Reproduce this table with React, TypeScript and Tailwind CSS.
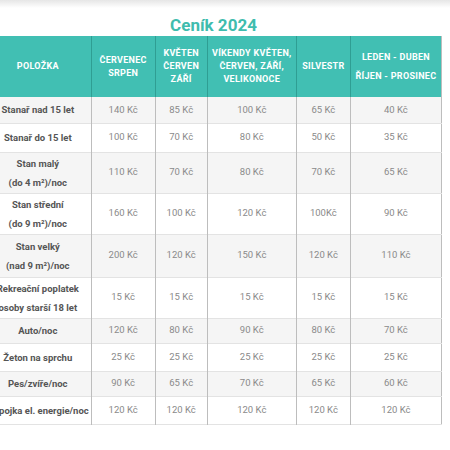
type Row = { label: string[]; values: string[]; h: number };

const rows: Row[] = [
  { label: ['Stanař nad 15 let'], values: ['140 Kč', '85 Kč', '100 Kč', '65 Kč', '40 Kč'], h: 26 },
  { label: ['Stanař do 15 let'], values: ['100 Kč', '70 Kč', '80 Kč', '50 Kč', '35 Kč'], h: 29 },
  { label: ['Stan malý', '(do 4 m²)/noc'], values: ['110 Kč', '70 Kč', '80 Kč', '70 Kč', '65 Kč'], h: 41 },
  { label: ['Stan střední', '(do 9 m²)/noc'], values: ['160 Kč', '100 Kč', '120 Kč', '100Kč', '90 Kč'], h: 41 },
  { label: ['Stan velký', '(nad 9 m²)/noc'], values: ['200 Kč', '120 Kč', '150 Kč', '120 Kč', '110 Kč'], h: 43 },
  { label: ['Rekreační poplatek', 'osoby starší 18 let'], values: ['15 Kč', '15 Kč', '15 Kč', '15 Kč', '15 Kč'], h: 41 },
  { label: ['Auto/noc'], values: ['120 Kč', '80 Kč', '90 Kč', '80 Kč', '70 Kč'], h: 25 },
  { label: ['Žeton na sprchu'], values: ['25 Kč', '25 Kč', '25 Kč', '25 Kč', '25 Kč'], h: 28 },
  { label: ['Pes/zvíře/noc'], values: ['90 Kč', '65 Kč', '70 Kč', '65 Kč', '60 Kč'], h: 25 },
  { label: ['Přípojka el. energie/noc'], values: ['120 Kč', '120 Kč', '120 Kč', '120 Kč', '120 Kč'], h: 28 },
];

const widths = ['w-[106px]', 'w-[64px]', 'w-[52px]', 'w-[89px]', 'w-[54px]', 'w-[91px]'];

function HeadCell({ lines, idx, wide }: { lines: string[]; idx: number; wide?: boolean }) {
  return (
    <th
      className={`${widths[idx]} border-r border-[#2f9e93] last:border-r-0 p-0 align-middle text-center font-bold text-[9px] tracking-[0.3px] text-white ${
        wide ? 'leading-[19px]' : 'leading-[13px]'
      }`}
    >
      {lines.map((l) => (
        <div key={l} className="whitespace-nowrap">
          {l}
        </div>
      ))}
    </th>
  );
}

export default function App() {
  return (
    <div className="w-[450px] h-[450px] overflow-hidden bg-white font-['Roboto','Liberation_Sans',sans-serif]">
      <div className="h-[8px] bg-gradient-to-b from-[#e6e6e6] to-white" />
      <div className="-ml-[15px] w-[457px] pt-[7px]">
        <h1 className="h-[20px] mb-[1px] text-center text-[17px] leading-[20px] font-bold text-[#3fbcae]">
          Ceník 2024
        </h1>
        <table className="table-fixed border-collapse w-[457px] border-r border-[#bdbdbd]">
          <thead>
            <tr className="h-[61px] bg-[#41bfb3]">
              <HeadCell idx={0} lines={['POLOŽKA']} />
              <HeadCell idx={1} lines={['ČERVENEC', 'SRPEN']} />
              <HeadCell idx={2} lines={['KVĚTEN', 'ČERVEN', 'ZÁŘÍ']} />
              <HeadCell idx={3} lines={['VÍKENDY KVĚTEN,', 'ČERVEN, ZÁŘÍ,', 'VELIKONOCE']} />
              <HeadCell idx={4} lines={['SILVESTR']} />
              <HeadCell idx={5} lines={['LEDEN - DUBEN', 'ŘÍJEN - PROSINEC']} wide />
            </tr>
          </thead>
          <tbody>
            {rows.map((r, i) => (
              <tr
                key={i}
                style={{ height: r.h }}
                className={`${i % 2 === 0 ? 'bg-[#f5f5f5]' : 'bg-white'} border-b border-[#e3e3e3]`}
              >
                <td className="p-0 text-center align-middle border-r border-[#bdbdbd] text-[9.5px] leading-[19px] font-bold text-[#555]">
                  {r.label.map((l) => (
                    <div key={l} className="whitespace-nowrap">
                      {l}
                    </div>
                  ))}
                </td>
                {r.values.map((v, j) => (
                  <td
                    key={j}
                    className="p-0 text-center align-middle border-r border-[#bdbdbd] last:border-r-0 text-[9.5px] text-[#8a8a8a]"
                  >
                    {v}
                  </td>
                ))}
              </tr>
            ))}
          </tbody>
        </table>
      </div>
    </div>
  );
}
